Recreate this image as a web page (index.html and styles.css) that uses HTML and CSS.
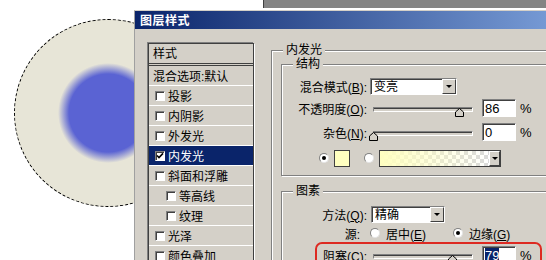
FILE: index.html
```html
<!DOCTYPE html>
<html lang="zh-CN">
<head>
    <meta charset="UTF-8">
    <title>图层样式 - 内发光</title>
    <link rel="stylesheet" href="styles.css">
</head>
<body>
<div class="screen">
    <div class="canvas">
        <div class="selection">
            <div class="glow"></div>
        </div>
    </div>

    <div class="side">
        <div class="backwin"></div>
        <div class="dialog">
            <div class="titlebar">图层样式</div>
            <div class="dialog-body">

                <!-- left: style list -->
                <div class="style-list">
                    <div class="list-head">样式</div>
                    <div class="list-row plain">混合选项:默认</div>
                    <div class="list-row"><span class="check"></span>投影</div>
                    <div class="list-row"><span class="check"></span>内阴影</div>
                    <div class="list-row"><span class="check"></span>外发光</div>
                    <div class="list-row selected">
                        <span class="check"><svg width="8" height="8" viewBox="0 0 8 8"><path d="M1 3.5 L3 5.6 L7 1.4" fill="none" stroke="#000" stroke-width="1.6"/></svg></span>内发光
                    </div>
                    <div class="list-row"><span class="check"></span>斜面和浮雕</div>
                    <div class="list-row sub"><span class="check"></span>等高线</div>
                    <div class="list-row sub"><span class="check"></span>纹理</div>
                    <div class="list-row"><span class="check"></span>光泽</div>
                    <div class="list-row"><span class="check"></span>颜色叠加</div>
                </div>

                <!-- right: settings -->
                <div class="panel">
                    <fieldset class="group outer">
                        <legend>内发光</legend>
                        <fieldset class="group inner">
                            <legend>结构</legend>
                            <div class="row h20">
                                <span class="lbl">混合模式(<u>B</u>):</span>
                                <div class="combo blend"><span class="combo-text">变亮</span><span class="combo-btn"></span></div>
                            </div>
                            <div class="row h24">
                                <span class="lbl">不透明度(<u>O</u>):</span>
                                <div class="slider"><div class="track"></div><svg class="thumb" style="--v: 86" width="9" height="9" viewBox="0 0 9 9"><path d="M0.5 8.5 V4 L4.5 0.5 L8.5 4 V8.5 Z" fill="#d4d0c8" stroke="#000"/></svg></div>
                                <div class="num">86</div>
                                <span class="pct">%</span>
                            </div>
                            <div class="row h24">
                                <span class="lbl">杂色(<u>N</u>):</span>
                                <div class="slider"><div class="track"></div><svg class="thumb" style="--v: 0" width="9" height="9" viewBox="0 0 9 9"><path d="M0.5 8.5 V4 L4.5 0.5 L8.5 4 V8.5 Z" fill="#d4d0c8" stroke="#000"/></svg></div>
                                <div class="num">0</div>
                                <span class="pct">%</span>
                            </div>
                            <div class="row h28 colors">
                                <span class="radio on"></span>
                                <span class="swatch"></span>
                                <span class="radio gap"></span>
                                <div class="grad"><span class="grad-fill"></span><span class="combo-btn"></span></div>
                            </div>
                        </fieldset>

                        <fieldset class="group pic">
                            <legend>图素</legend>
                            <div class="row h20 first">
                                <span class="lbl">方法(<u>Q</u>):</span>
                                <div class="combo method"><span class="combo-text">精确</span><span class="combo-btn"></span></div>
                            </div>
                            <div class="row h18">
                                <span class="lbl short">源:</span>
                                <span class="opt first-opt"><span class="radio"></span><span>居中(<u>E</u>)</span></span>
                                <span class="opt"><span class="radio on"></span><span>边缘(<u>G</u>)</span></span>
                            </div>
                            <div class="marked">
                                <div class="row h22">
                                    <span class="lbl">阻塞(<u>C</u>):</span>
                                    <div class="slider"><div class="track"></div><svg class="thumb" style="--v: 79" width="9" height="9" viewBox="0 0 9 9"><path d="M0.5 8.5 V4 L4.5 0.5 L8.5 4 V8.5 Z" fill="#d4d0c8" stroke="#000"/></svg></div>
                                    <div class="num"><span class="sel">79</span></div>
                                    <span class="pct">%</span>
                                </div>
                            </div>
                        </fieldset>
                    </fieldset>
                </div>

            </div>
        </div>
    </div>
</div>
</body>
</html>
```

FILE: styles.css
```css
body {
    margin: 0;
    background-color: #fff;
    font-family: "Liberation Sans", "Noto Sans CJK SC", sans-serif;
    font-size: 12px;
    color: #000;
}
.screen {
    display: flex;
    width: 546px;
    height: 260px;
    overflow: hidden;
}

/* canvas with the glowing circle */
.canvas {
    width: 134px;
    flex-shrink: 0;
    overflow: hidden;
}
.selection {
    width: 186px;
    height: 186px;
    margin: 19px 0 0 14px;
    border: 1px dashed #000;
    border-radius: 50%;
    background-color: #e7e5d7;
    display: flex;
    align-items: center;
    justify-content: center;
}
.glow {
    width: 100px;
    height: 100px;
    border-radius: 50%;
    background: radial-gradient(closest-side, #5a63d3 0, #5a63d3 78%, rgba(90, 99, 211, 0.5) 89%, rgba(90, 99, 211, 0) 100%);
}

/* dialog */
.side {
    flex: 1;
    min-width: 0;
    display: flex;
    flex-direction: column;
}
.backwin {
    height: 8px;
    margin: 0 0 2px 129px;
    background-color: #848484;
    border-left: 1px solid #404040;
}
.dialog {
    flex: 1;
    overflow: hidden;
    background-color: #d4d0c8;
    border-left: 1px solid #a0a0a0;
    border-top: 1px solid #d4d0c8;
}
.titlebar {
    height: 18px;
    line-height: 18px;
    padding-left: 5px;
    background: linear-gradient(to right, #0a246a, #7599d4);
    color: #fff;
    font-family: "Noto Sans CJK SC", sans-serif;
    font-weight: bold;
    letter-spacing: 0.5px;
}
.dialog-body {
    display: flex;
    align-items: flex-start;
    padding: 14px 0 0 13px;
}

/* style list */
.style-list {
    width: 106px;
    flex-shrink: 0;
    box-sizing: border-box;
    border: 1px solid #404040;
    box-shadow: -1px -1px 0 #808080, 1px 1px 0 #fff;
}
.list-head {
    height: 22px;
    box-sizing: border-box;
    padding: 2px 0 0 4px;
    line-height: 16px;
    border-bottom: 3px double #404040;
}
.list-row {
    display: flex;
    align-items: center;
    gap: 3px;
    height: 20px;
    box-sizing: border-box;
    padding-left: 6px;
    border-bottom: 1px solid #fff;
    white-space: nowrap;
}
.list-row.plain {
    padding-left: 4px;
}
.list-row.sub {
    padding-left: 17px;
}
.list-row.selected {
    background-color: #0a246a;
    color: #fff;
}
.check {
    width: 10px;
    height: 10px;
    flex-shrink: 0;
    box-sizing: border-box;
    background-color: #fff;
    border: 1px solid;
    border-color: #808080 #fff #fff #808080;
    box-shadow: inset 1px 1px 0 #404040;
    display: flex;
    align-items: center;
    justify-content: center;
}

/* right panel */
.panel {
    margin-left: 17px;
    flex-shrink: 0;
}
.group {
    margin: 0;
    padding: 0 0 0 9px;
    min-width: 0;
    width: 300px;
    box-sizing: border-box;
    border: 1px solid #808080;
    box-shadow: inset 1px 1px 0 #fff, 1px 1px 0 #fff;
}
.group > legend {
    margin-left: 2px;
    padding: 0 3px;
    line-height: 14px;
    background-color: #d4d0c8;
}
.group.outer {
    padding-bottom: 40px;
}
.group.inner {
    padding-top: 5px;
    padding-bottom: 3px;
}
.group.pic {
    margin-top: 8px;
}

.row {
    display: flex;
    align-items: center;
    white-space: nowrap;
}
.row.first {
    margin-top: 6px;
}
.h18 { height: 18px; }
.h20 { height: 20px; }
.h22 { height: 22px; }
.h24 { height: 24px; }
.h28 { height: 28px; }

.lbl {
    width: 76px;
    flex-shrink: 0;
    text-align: right;
}
.lbl.short {
    width: 69px;
}

/* combo box */
.combo {
    display: flex;
    height: 17px;
    box-sizing: border-box;
    border: 1px solid;
    border-color: #808080 #fff #fff #808080;
    box-shadow: inset 1px 1px 0 #404040;
    background-color: #fff;
}
.combo.blend {
    width: 87px;
    margin-left: 3px;
}
.combo.method {
    width: 74px;
    margin-left: 4px;
}
.combo-text {
    flex: 1;
    padding: 1px 0 0 3px;
    line-height: 14px;
}
.combo-btn {
    width: 14px;
    flex-shrink: 0;
    box-sizing: border-box;
    background-color: #d4d0c8;
    border: 1px solid;
    border-color: #fff #404040 #404040 #fff;
    display: flex;
    align-items: center;
    justify-content: center;
}
.combo-btn::after {
    content: "";
    border-left: 3px solid transparent;
    border-right: 3px solid transparent;
    border-top: 3px solid #000;
}

/* slider */
.slider {
    position: relative;
    width: 108px;
    height: 16px;
    margin-left: 2px;
    flex-shrink: 0;
}
.track {
    margin: 7px 4px 0;
    height: 5px;
    box-sizing: border-box;
    border: 1px solid;
    border-color: #808080 #fff #fff #808080;
    box-shadow: inset 0 1px 0 #404040;
    background-color: #d4d0c8;
}
.thumb {
    position: absolute;
    top: 8px;
    left: calc(var(--v) * 1px - 0.5px);
}

/* number field */
.num {
    width: 34px;
    height: 18px;
    margin-left: 5px;
    flex-shrink: 0;
    box-sizing: border-box;
    border: 1px solid;
    border-color: #808080 #fff #fff #808080;
    box-shadow: inset 1px 1px 0 #404040;
    background-color: #fff;
    padding: 1px 0 0 2px;
    line-height: 15px;
    font-size: 13px;
}
.num .sel {
    background-color: #0a246a;
    color: #fff;
}
.pct {
    margin-left: 4px;
    font-size: 13px;
}

/* colour row */
.colors {
    padding-left: 28px;
}
.radio {
    width: 10px;
    height: 10px;
    flex-shrink: 0;
    box-sizing: border-box;
    border-radius: 50%;
    background-color: #fff;
    border: 1px solid;
    border-color: #808080 #e4e4e4 #e4e4e4 #808080;
    display: flex;
    align-items: center;
    justify-content: center;
}
.radio.on::after {
    content: "";
    width: 4px;
    height: 4px;
    border-radius: 50%;
    background-color: #000;
}
.radio.gap {
    margin-left: 14px;
}
.swatch {
    width: 16px;
    height: 17px;
    margin-left: 5px;
    box-sizing: border-box;
    border: 1px solid #404040;
    background-color: #ffffc0;
}
.grad {
    display: flex;
    width: 122px;
    height: 17px;
    margin-left: 5px;
    box-sizing: border-box;
    border: 1px solid #404040;
}
.grad-fill {
    flex: 1;
    background:
        linear-gradient(to right, #ffffc0, rgba(255, 255, 192, 0)),
        repeating-conic-gradient(#dadada 0 25%, #fff 0 50%) 0 0 / 8px 8px;
}
.grad .combo-btn {
    width: 11px;
}

/* source options */
.opt {
    display: flex;
    align-items: center;
    gap: 6px;
}
.opt.first-opt {
    width: 83px;
    margin-left: 10px;
}

/* highlighted choke row */
.marked {
    width: 227px;
    height: 30px;
    margin-left: 24px;
    box-sizing: border-box;
    border: 2px solid #dd2a22;
    border-radius: 7px;
}
.marked .lbl {
    width: 50px;
}
```
